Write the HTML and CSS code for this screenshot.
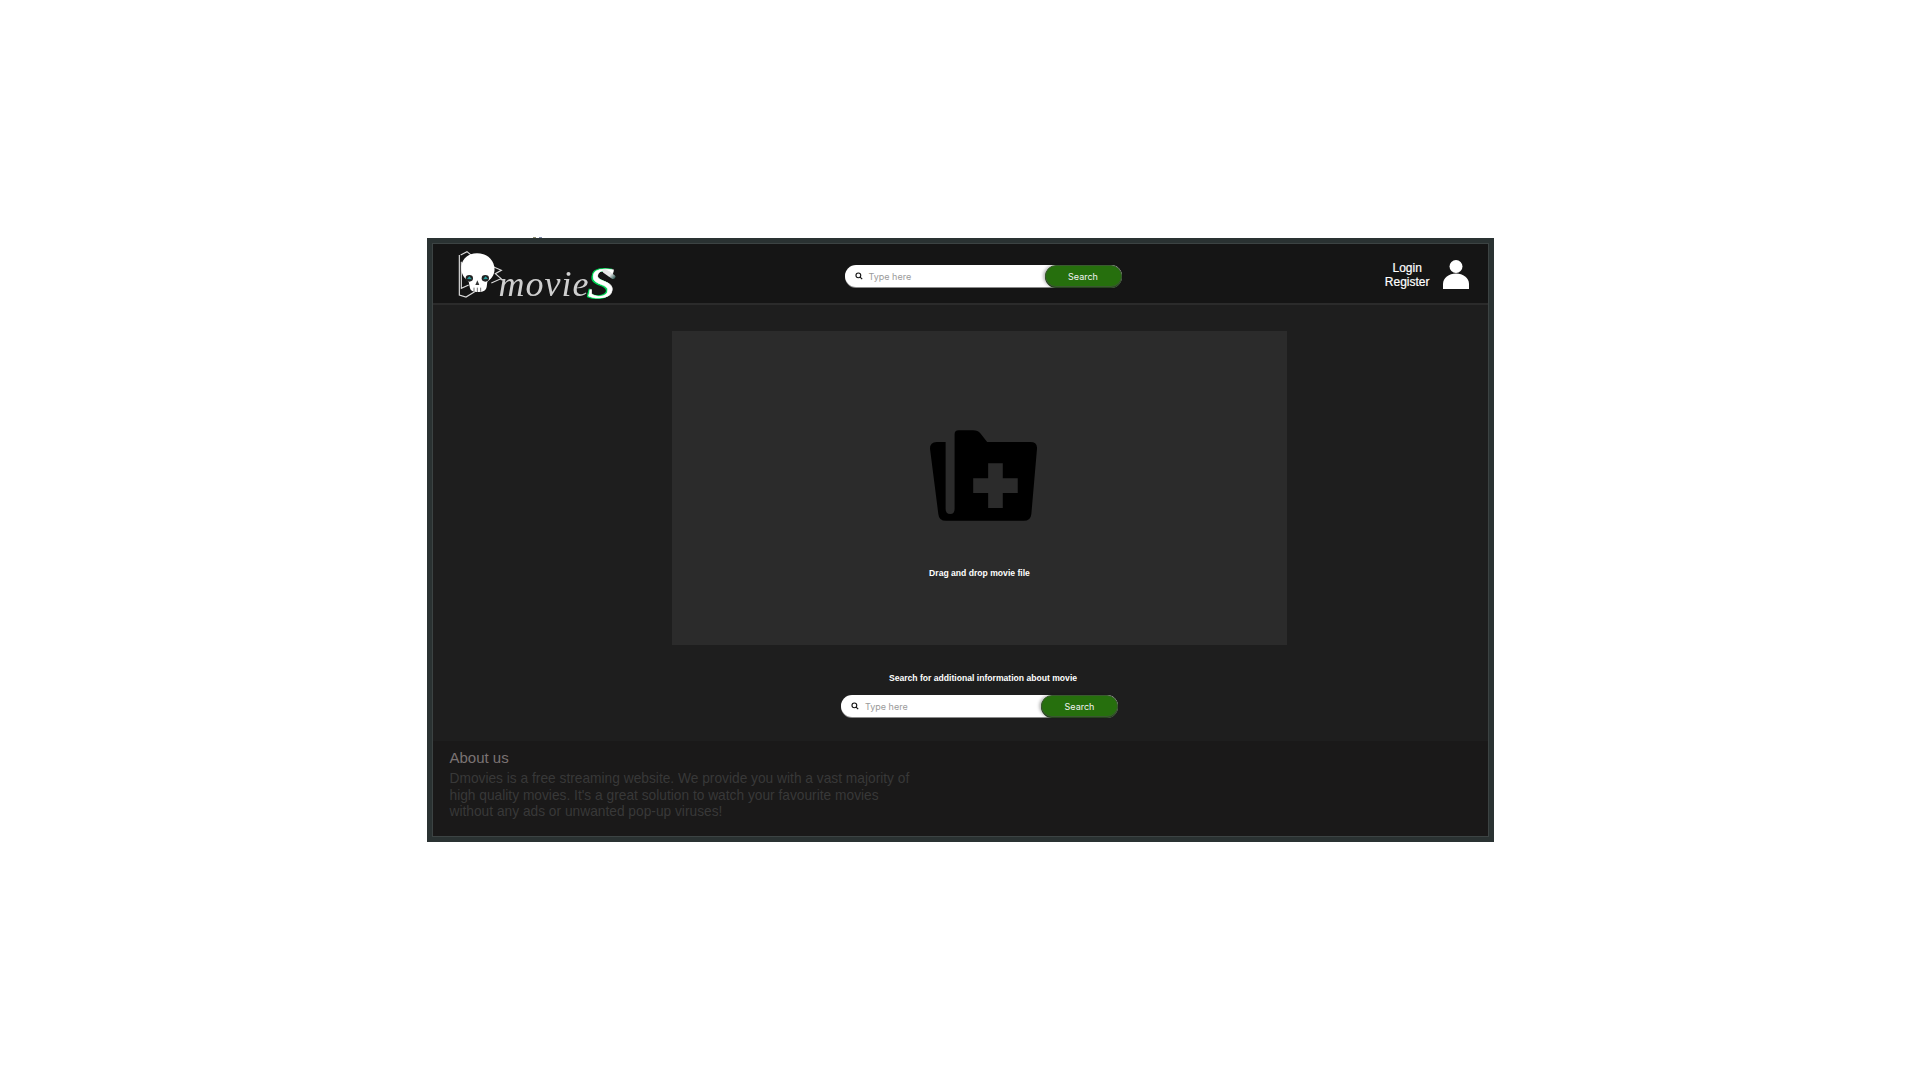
FILE: index.html
```html
<!DOCTYPE html>
<html lang="en">
<head>
<meta charset="utf-8">
<title>Dmovies</title>
<link rel="stylesheet" href="styles.css">
</head>
<body>
<div class="frame">
  <header class="header">
    <a class="logo">
      <svg class="skull" viewBox="0 0 165 165" aria-hidden="true">
        <g fill="none" stroke="#dcdcdc" stroke-width="3.500">
          <path d="M22 30V150L42 156L68 140"/>
          <path d="M26 30L45 20L62 34"/>
          <path d="M28 50L28 130L50 120"/>
          <path d="M120 64L148 76L130 86L147 101L118 114"/>
        </g>
        <path fill="#fff" d="M75 25C43 25 25 48 28 75C30 92 40 102 50 110L54 130Q58 143 80 141Q102 141 104 126L106 110C122 98 130 85 127 65C122 40 102 25 75 25Z"/>
        <ellipse cx="52" cy="100" rx="11" ry="10" fill="#222"/>
        <ellipse cx="100" cy="100" rx="11" ry="10" fill="#222"/>
        <path d="M45 102L52 94L60 103Z M93 103L101 94L108 102Z" fill="#2a9d9d"/>
        <path d="M76 106L70 120H82Z" fill="#333"/>
        <path d="M66 128V140M76 128V141M86 128V140" stroke="#555" stroke-width="2.5"/>
      </svg>
      <span class="logo-word">movie</span><span class="logo-s">S</span>
    </a>
    <div class="search">
      <svg class="search-icon" viewBox="0 0 10 10" aria-hidden="true"><circle cx="4.2" cy="4.2" r="3" fill="none" stroke="#111" stroke-width="1.4"/><path d="M6.4 6.4L9 9" stroke="#111" stroke-width="1.5"/></svg>
      <span class="placeholder">Type here</span>
      <span class="search-btn">Search</span>
    </div>
    <div class="account">
      <div class="account-links"><a>Login</a><a>Register</a></div>
      <svg class="user" viewBox="0 0 26 29" aria-hidden="true">
        <circle cx="13" cy="6.5" r="6.5" fill="#fff"/>
        <path fill="#fff" d="M0 29V24C0 18 6 13.500 13 13.500S26 18 26 24V29Z"/>
      </svg>
    </div>
  </header>
  <main class="main">
    <section class="drop">
      <svg class="folder" viewBox="88 60 322 273" aria-hidden="true">
        <path fill="#000" fill-rule="evenodd" d="M88 116Q88 96 108 96H135V297Q135 312 149 312Q162 312 162 297V72Q162 60 174 60H218Q232 60 240 70L260 96H390Q411 96 410 116L393 312Q391 333 370 333H136Q115 333 113 312ZM263 160V205H218V249H263V294H307V249H352V205H307V160Z"/>
      </svg>
      <p class="drop-text">Drag and drop movie file</p>
    </section>
    <p class="lookup-title">Search for additional information about movie</p>
    <div class="search">
      <svg class="search-icon" viewBox="0 0 10 10" aria-hidden="true"><circle cx="4.2" cy="4.2" r="3" fill="none" stroke="#111" stroke-width="1.4"/><path d="M6.4 6.4L9 9" stroke="#111" stroke-width="1.5"/></svg>
      <span class="placeholder">Type here</span>
      <span class="search-btn">Search</span>
    </div>
  </main>
  <footer class="footer">
    <h2 class="about-title">About us</h2>
    <p class="about-text">Dmovies is a free streaming website. We provide you with a vast majority of high quality movies. It's a great solution to watch your favourite movies without any ads or unwanted pop-up viruses!</p>
  </footer>
</div>
</body>
</html>
```
FILE: styles.css
```css
* { box-sizing: border-box; }
html, body { margin: 0; height: 100%; }
body {
  background: #fff;
  display: flex;
  align-items: center;
  justify-content: center;
  font-family: "Liberation Sans", Arial, sans-serif;
}
.frame {
  position: relative;
  width: 1067px;
  height: 604px;
  background: #1e1e1e;
  border: 5px solid #2a3232;
  outline: 1px solid #3c4343;
  outline-offset: -6px;
  padding: 1px;
  display: flex;
  flex-direction: column;
}
.frame::before {
  content: "";
  position: absolute;
  left: 101px;
  top: -6px;
  width: 9px;
  height: 1px;
  background: linear-gradient(90deg, #8a8a70 0 30%, transparent 30% 65%, #7f8aa8 65%);
}
.header {
  height: 61px;
  flex: none;
  background: #151515;
  border-bottom: 2px solid #2b2b2b;
  padding-left: 26px;
  padding-right: 19px;
  display: flex;
  align-items: center;
}
.logo {
  width: 386px;
  flex: none;
  height: 59px;
  display: flex;
  align-items: flex-start;
  color: #cfcfcf;
  filter: blur(.3px);
}
.skull {
  width: 55px;
  height: 55px;
  margin: 1px 0 0 -7px;
  flex: none;
}
.logo-word {
  font-family: "Liberation Serif", serif;
  font-style: italic;
  font-size: 36px;
  letter-spacing: 1px;
  line-height: 40px;
  margin: 20px 0 0 -8px;
}
.logo-s {
  position: relative;
  display: inline-block;
  font-family: "Liberation Serif", serif;
  font-style: italic;
  font-size: 44px;
  line-height: 46px;
  margin: 17px 0 0 -1px;
  color: #fff;
  -webkit-text-stroke: .4px #fff;
  text-shadow: -1.500px 1px 0 #00d455, -1px -1px 0 #00d455;
  transform: scaleX(1.2);
  transform-origin: left center;
}
.logo-s::after {
  content: "";
  position: absolute;
  left: 11px;
  top: 11px;
  width: 13px;
  height: 4px;
  border-radius: 2px;
  background: linear-gradient(90deg, #e8e8e8 60%, #2f5a55 100%);
  transform: rotate(40deg);
}
.search {
  width: 277px;
  height: 22px;
  flex: none;
  background: #fff;
  border-radius: 11px;
  box-shadow: 0 1px 0 #8a8a8a;
  display: flex;
  align-items: center;
  padding-left: 10px;
  font-family: Inter, "Open Sans", sans-serif;
  font-size: 9px;
}
.header .search { margin-top: 5px; }
.search-icon { width: 8px; height: 8px; flex: none; }
.placeholder {
  margin-left: 6px;
  color: #9a9a9a;
  flex: 1;
}
.search-btn {
  width: 77px;
  height: 22px;
  flex: none;
  background: #266f0d;
  color: #f2f2f2;
  border-radius: 11px;
  border: 1px solid #3a5a30;
  box-shadow: -2px 0 3px rgba(0, 0, 0, .25), 0 1px 0 #2a4a20;
  display: flex;
  align-items: center;
  justify-content: center;
}
.account {
  margin-left: auto;
  display: flex;
  align-items: center;
  gap: 15px;
  margin-top: 2px;
}
.account-links {
  display: flex;
  flex-direction: column;
  align-items: center;
  color: #fff;
  font-size: 12px;
  line-height: 14px;
  -webkit-text-stroke: .2px #fff;
  margin-right: -2px;
}
.user { width: 26px; height: 29px; flex: none; }
.main {
  flex: 1;
  min-height: 0;
  padding: 26px 0 0 39px;
  display: flex;
  flex-direction: column;
  align-items: center;
}
.drop {
  width: 615px;
  height: 314px;
  flex: none;
  background: #2b2b2b;
  display: flex;
  flex-direction: column;
  align-items: center;
  padding-top: 99px;
}
.folder { width: 107px; height: 91px; margin-left: 8px; flex: none; }
.drop-text {
  margin: 46px 0 0;
  color: #fff;
  font-size: 8.600px;
  font-weight: bold;
  line-height: 12px;
}
.lookup-title {
  margin: 27px 0 11px 7px;
  color: #fff;
  font-size: 8.600px;
  font-weight: bold;
  line-height: 12px;
}
.footer {
  height: 95px;
  flex: none;
  background: #1a1919;
  padding: 8px 17px 0;
}
.about-title {
  margin: 0;
  color: #7a7373;
  font-size: 15px;
  font-weight: normal;
  line-height: 18px;
}
.about-text {
  margin: 4px 0 0;
  max-width: 465px;
  color: #383838;
  font-size: 13.750px;
  line-height: 16.500px;
}
```
